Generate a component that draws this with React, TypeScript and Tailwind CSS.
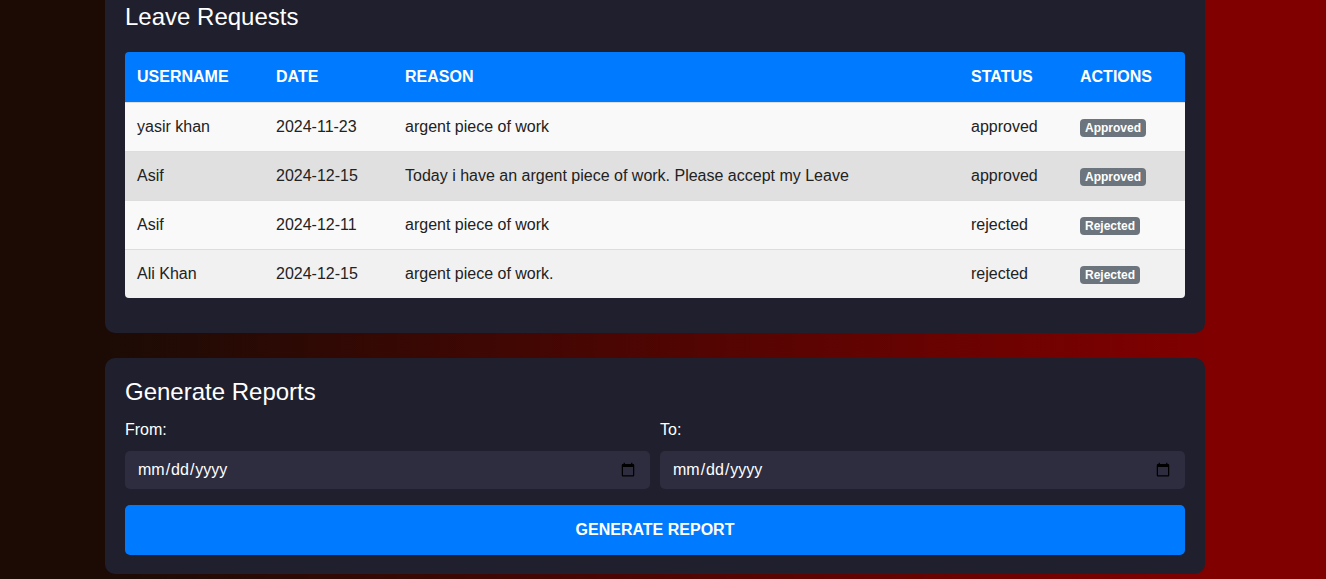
const leaves = [
  { id: 1, username: "yasir khan", date: "2024-11-23", reason: "argent piece of work", status: "approved" },
  { id: 2, username: "Asif", date: "2024-12-15", reason: "Today i have an argent piece of work. Please accept my Leave", status: "approved" },
  { id: 3, username: "Asif", date: "2024-12-11", reason: "argent piece of work", status: "rejected" },
  { id: 4, username: "Ali Khan", date: "2024-12-15", reason: "argent piece of work.", status: "rejected" },
];

const rowBg = ["bg-[#f9f9f9]", "bg-[#e0e0e0]", "bg-[#f9f9f9]", "bg-[#f1f1f1]"];

export default function App() {
  return (
    <main className="min-h-screen overflow-hidden bg-[linear-gradient(to_right,#1c0b05_105px,#800000_1205px)] font-['Liberation_Sans',Arial,sans-serif]">
      <div className="w-[1100px] ml-[105px] flex flex-col gap-[25px] pb-5">

        {/* Leave Requests */}
        <section className="-mt-[17px] bg-[#1f1f2e] rounded-[10px] px-5 pt-5 pb-[35px]">
          <h2 className="text-white text-[24px] leading-[28px] mb-[21px]">Leave Requests</h2>
          <div className="rounded-[4px] overflow-hidden">
            <table className="w-full border-collapse text-[16px] text-[#222] table-fixed">
              <thead>
                <tr className="bg-[#007bff] text-white uppercase text-left h-[50px] border-b border-[#dddddd]">
                  <th className="w-[139px] px-3 font-bold">Username</th>
                  <th className="w-[129px] px-3 font-bold">Date</th>
                  <th className="px-3 font-bold">Reason</th>
                  <th className="w-[109px] px-3 font-bold">Status</th>
                  <th className="w-[117px] px-3 font-bold">Actions</th>
                </tr>
              </thead>
              <tbody>
                {leaves.map((l, i) => (
                  <tr key={l.id} className={`${rowBg[i]} h-[49px] border-b border-[#dddddd] last:border-b-0`}>
                    <td className="px-3">{l.username}</td>
                    <td className="px-3">{l.date}</td>
                    <td className="px-3">{l.reason}</td>
                    <td className="px-3">{l.status}</td>
                    <td className="px-3">
                      <span className="inline-block bg-[#6c757d] text-white text-[12px] font-bold leading-[12px] px-[5px] py-[3px] rounded-[4px]">
                        {l.status === "approved" ? "Approved" : "Rejected"}
                      </span>
                    </td>
                  </tr>
                ))}
              </tbody>
            </table>
          </div>
        </section>

        {/* Generate Reports */}
        <section className="bg-[#1f1f2e] rounded-[10px] px-5 pt-5 pb-[19px]">
          <h2 className="text-white text-[24px] leading-[28px] mb-[14px]">Generate Reports</h2>
          <div className="grid grid-cols-2 gap-[10px]">
            <div className="flex flex-col gap-[11px]">
              <label className="text-white text-[16px] leading-5">From:</label>
              <input type="date" className="h-[38px] rounded-[5px] bg-[#2d2d3f] text-white text-[16px] px-3 outline-none" />
            </div>
            <div className="flex flex-col gap-[11px]">
              <label className="text-white text-[16px] leading-5">To:</label>
              <input type="date" className="h-[38px] rounded-[5px] bg-[#2d2d3f] text-white text-[16px] px-3 outline-none" />
            </div>
          </div>
          <button className="mt-4 w-full h-[50px] rounded-[5px] bg-[#007bff] text-white font-bold text-[16px] uppercase">
            Generate Report
          </button>
        </section>

      </div>
    </main>
  );
}
